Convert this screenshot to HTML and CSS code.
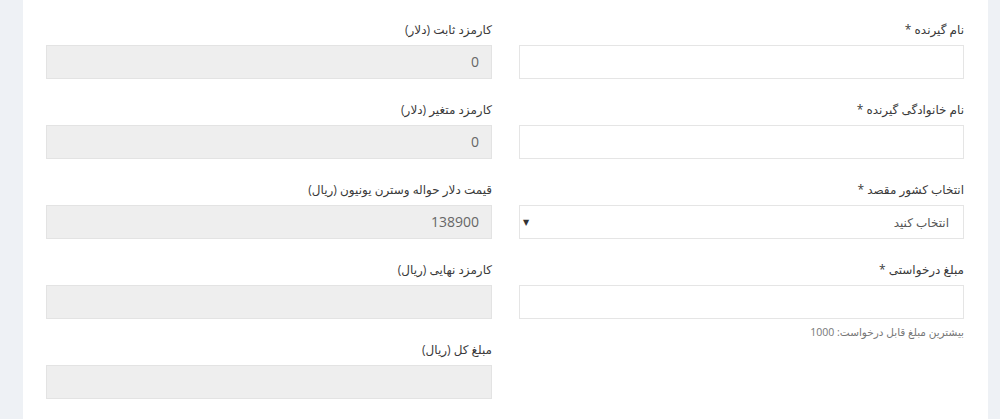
FILE: index.html
```html
<!DOCTYPE html>
<html lang="fa" dir="rtl">
<head>
<meta charset="utf-8">
<title>فرم حواله</title>
<link rel="stylesheet" href="styles.css">
</head>
<body>
<div class="page">
  <div class="panel">
    <div class="grid">
      <div class="col">
        <div class="field">
          <label class="label">نام گیرنده *</label>
          <input class="input" type="text">
        </div>
        <div class="field">
          <label class="label">نام خانوادگی گیرنده *</label>
          <input class="input" type="text">
        </div>
        <div class="field">
          <label class="label">انتخاب کشور مقصد *</label>
          <div class="select">
            <span class="select-text">انتخاب کنید</span>
            <span class="select-arrow">▼</span>
          </div>
        </div>
        <div class="field">
          <label class="label">مبلغ درخواستی *</label>
          <input class="input" type="text">
          <div class="help">بیشترین مبلغ قابل درخواست: 1000</div>
        </div>
      </div>
      <div class="col">
        <div class="field">
          <label class="label">کارمزد ثابت (دلار)</label>
          <div class="input disabled">0</div>
        </div>
        <div class="field">
          <label class="label">کارمزد متغیر (دلار)</label>
          <div class="input disabled">0</div>
        </div>
        <div class="field">
          <label class="label">قیمت دلار حواله وسترن یونیون (ریال)</label>
          <div class="input disabled">138900</div>
        </div>
        <div class="field">
          <label class="label">کارمزد نهایی (ریال)</label>
          <div class="input disabled"></div>
        </div>
        <div class="field">
          <label class="label">مبلغ کل (ریال)</label>
          <div class="input disabled"></div>
        </div>
      </div>
    </div>
  </div>
</div>
</body>
</html>
```

FILE: styles.css
```css
* { box-sizing: border-box; }
html, body {
  margin: 0;
  padding: 0;
  height: 100%;
  background: #eef1f5;
  font-family: "Open Sans", "DejaVu Sans", sans-serif;
  color: #333;
  overflow: hidden;
}
.page {
  padding: 0 12px 0 23px;
  height: 100%;
}
.panel {
  background: #fff;
  height: 100%;
  padding: 20px 24px 0 23px;
}
.grid {
  display: grid;
  grid-template-columns: 445px 446px;
  column-gap: 27px;
  justify-content: start;
}
.field {
  display: flex;
  flex-direction: column;
  margin-bottom: 21px;
}
.label {
  display: block;
  font-size: 12px;
  line-height: 20px;
  height: 20px;
  margin-bottom: 5px;
  color: #3a3a3a;
}
.input {
  display: block;
  width: 100%;
  height: 34px;
  border: 1px solid #e5e5e5;
  background: #fff;
  padding: 0 12px;
  font-family: "Open Sans", "DejaVu Sans", sans-serif;
  font-size: 14px;
  line-height: 32px;
  color: #555;
  outline: none;
}
.disabled {
  background: #eeeeee;
  border-color: #e3e3e3;
  color: #666;
}
.select {
  height: 34px;
  border: 1px solid #e5e5e5;
  background: #fff;
  display: flex;
  align-items: center;
  justify-content: space-between;
  padding: 0 14px 0 3px;
  font-size: 12px;
  color: #555;
}
.select-arrow {
  font-size: 8px;
  color: #333;
  font-family: "DejaVu Sans", sans-serif;
}
.help {
  margin-top: 5px;
  font-size: 10.5px;
  line-height: 17px;
  color: #777;
}
```
